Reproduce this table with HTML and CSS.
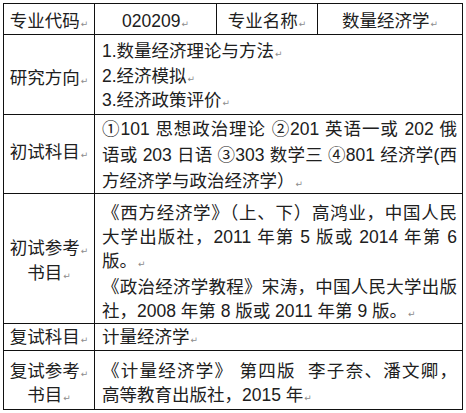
FILE: index.html
```html
<!DOCTYPE html>
<html lang="zh-CN">
<head>
<meta charset="utf-8">
<link rel="stylesheet" href="styles.css">
</head>
<body>
<div class="sheet">
  <div class="grid">
    <div class="cell head">专业代码<span class="pm">↵</span></div>
    <div class="cell head">020209<span class="pm">↵</span></div>
    <div class="cell head">专业名称<span class="pm">↵</span></div>
    <div class="cell head">数量经济学<span class="pm">↵</span></div>

    <div class="cell label lab-dir">
      <div class="ln">研究方向<span class="pm">↵</span></div>
    </div>
    <div class="cell body dir">
      <div class="ln">1.数量经济理论与方法<span class="pm">↵</span></div>
      <div class="ln">2.经济模拟<span class="pm">↵</span></div>
      <div class="ln">3.经济政策评价<span class="pm">↵</span></div>
    </div>

    <div class="cell label lab-exam">
      <div class="ln">初试科目<span class="pm">↵</span></div>
    </div>
    <div class="cell body exam">
      <div class="ln j">①101 思想政治理论 ②201 英语一或 202 俄</div>
      <div class="ln j">语或 203 日语 ③303 数学三 ④801 经济学(西</div>
      <div class="ln">方经济学与政治经济学）<span class="pm">↵</span></div>
    </div>

    <div class="cell label lab-books">
      <div class="ln">初试参考<span class="pm">↵</span></div>
      <div class="ln">书目<span class="pm">↵</span></div>
    </div>
    <div class="cell body books">
      <div class="para">
        <div class="ln j">《西方经济学》（上、下）高鸿业，中国人民</div>
        <div class="ln j">大学出版社，2011 年第 5 版或 2014 年第 6</div>
        <div class="ln">版。<span class="pm">↵</span></div>
      </div>
      <div class="para">
        <div class="ln j">《政治经济学教程》宋涛，中国人民大学出版</div>
        <div class="ln">社，2008 年第 8 版或 2011 年第 9 版。<span class="pm">↵</span></div>
      </div>
    </div>

    <div class="cell label lab-retest">
      <div class="ln">复试科目<span class="pm">↵</span></div>
    </div>
    <div class="cell body retest">
      <div class="ln">计量经济学<span class="pm">↵</span></div>
    </div>

    <div class="cell label lab-rebooks">
      <div class="ln">复试参考<span class="pm">↵</span></div>
      <div class="ln">书目<span class="pm">↵</span></div>
    </div>
    <div class="cell body rebooks">
      <div class="ln j">《计量经济学》 第四版&nbsp; 李子奈、潘文卿，</div>
      <div class="ln">高等教育出版社，2015 年<span class="pm">↵</span></div>
    </div>
  </div>
</div>
</body>
</html>
```

FILE: styles.css
```css
html, body {
  margin: 0;
  background: #ffffff;
}

body {
  font-family: "Liberation Sans", "Noto Sans CJK SC", sans-serif;
  font-size: 17.5px;
  color: #202020;
}

.sheet {
  padding: 3px 0 0 3px;
}

.grid {
  display: grid;
  grid-template-columns: 90px 121px 100px 144px;
  grid-template-rows: 30px 79px 78px 129px 26px 58px;
  gap: 1px;
  padding: 1px;
  background: #111;
  width: max-content;
}

.cell {
  background: #ffffff;
  min-width: 0;
  overflow: hidden;
}

/* header row */
.head {
  text-align: center;
  line-height: 25px;
  padding-top: 4.5px;
}

/* left label column */
.label {
  display: flex;
  flex-direction: column;
  align-items: center;
  line-height: 25px;
}

.lab-dir { padding-top: 30.5px; }
.lab-exam { padding-top: 24.5px; }
.lab-books { padding-top: 42px; }
.lab-retest { padding-top: 1px; }
.lab-rebooks { padding-top: 7.5px; line-height: 24.5px; }

/* content cells spanning the three right columns */
.body {
  grid-column: 2 / 5;
  padding: 0 5px 0 7px;
}

.ln {
  text-align: left;
}

.label .ln {
  text-align: center;
}

.j {
  text-align: justify;
  text-align-last: justify;
}

.dir {
  padding-top: 4px;
  line-height: 24.5px;
}

.exam {
  padding-top: 1px;
  line-height: 26px;
}

.books {
  padding-top: 7px;
  line-height: 24px;
}

.books .para + .para {
  margin-top: 2px;
}

.retest {
  padding-top: 1px;
  line-height: 25px;
}

.rebooks {
  padding-top: 7.5px;
  line-height: 24.5px;
}

.pm {
  font-family: "DejaVu Sans", sans-serif;
  font-size: 9px;
  line-height: 0;
  color: #8c8c8c;
  margin-left: 1px;
}
```
